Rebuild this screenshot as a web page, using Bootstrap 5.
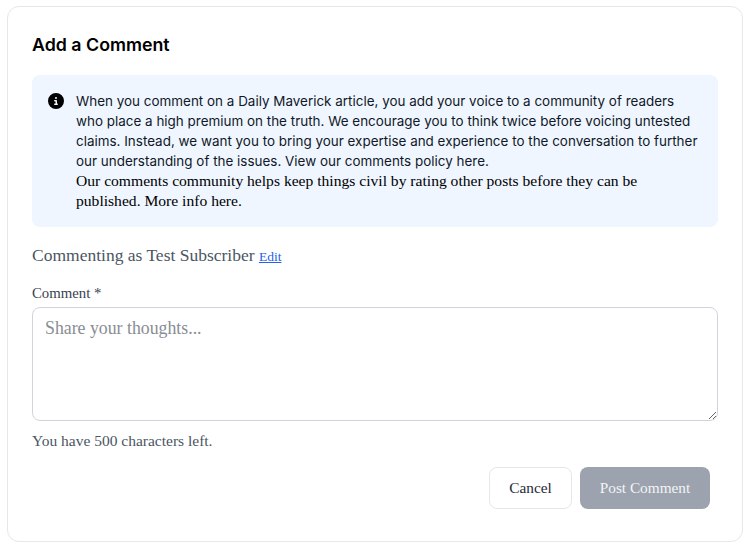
<!DOCTYPE html>
<html lang="en">
<head>
<meta charset="utf-8">
<title>Add a Comment</title>
<link href="https://cdn.jsdelivr.net/npm/bootstrap@5.3.0/dist/css/bootstrap.min.css" rel="stylesheet">
<style>
html,body{background:#fff;height:553px;overflow:hidden}
body{font-family:"Liberation Serif",serif;padding:6px 9px 0 7px}
.cm-panel{height:536px;border:1px solid #e5e7eb;border-radius:12px;padding:24px;background:#fff}
.cm-title{font-family:Inter,sans-serif;font-weight:600;font-size:17.8px;line-height:28px;color:#000;margin:0 0 16px}
.cm-note{background:#eff6ff;border-radius:8px;padding:16px;height:152px;margin-bottom:16px;font-size:14px;line-height:20px;color:#111827}
.cm-sans{font-family:Inter,sans-serif;font-size:13.45px;display:block}
.cm-serif{font-size:15.6px;display:block;color:#000}
.cm-icon{width:16px;height:16px;flex:none;margin:2px 12px 0 0}
.cm-as{font-size:17.5px;line-height:24px;color:#4b5563;margin:0 0 16px;height:24px}
.cm-as a{font-size:13.5px;color:#2563eb}
.cm-label{font-size:14.8px;line-height:20px;color:#374151;margin-bottom:4px;display:block}
.cm-input{display:block;width:100%;height:114px;border:1px solid #d1d5db;border-radius:8px;padding:8px 12px;font-size:17.8px;line-height:24px;font-family:inherit;color:#111827;background:#fff;outline:0}
.cm-input::placeholder{color:#888d94}
.cm-hint{font-size:15.5px;line-height:20px;color:#4b5563;margin:10px 0 16px}
.cm-btn{height:42px;border-radius:8px;font-size:15.3px;line-height:20px;font-family:inherit}
.cm-cancel{width:83px;background:#fff;border:1px solid #e5e7eb;color:#1f2937;padding:0}
.cm-post{width:130px;background:#9ca3af;border:0;color:#f3f4f6;padding:0}
.cm-post:disabled{background:#9ca3af;color:#f3f4f6;opacity:1}
.cm-actions{padding-right:8px}
</style>
</head>
<body>
<div class="cm-panel">
  <h2 class="cm-title">Add a Comment</h2>
  <div class="cm-note d-flex">
    <svg class="cm-icon" viewBox="0 0 512 512" aria-hidden="true"><path fill="#000" d="M256 512A256 256 0 1 0 256 0a256 256 0 1 0 0 512zM216 336h24V272H216c-13.3 0-24-10.7-24-24s10.7-24 24-24h48c13.3 0 24 10.7 24 24v88h8c13.3 0 24 10.7 24 24s-10.7 24-24 24H216c-13.3 0-24-10.7-24-24s10.7-24 24-24zm40-208a32 32 0 1 1 0 64 32 32 0 1 1 0-64z"/></svg>
    <div>
      <span class="cm-sans">When you comment on a Daily Maverick article, you add your voice to a community of readers who place a high premium on the truth. We encourage you to think twice before voicing untested claims. Instead, we want you to bring your expertise and experience to the conversation to further our understanding of the issues. View our comments policy here.</span>
      <span class="cm-serif">Our comments community helps keep things civil by rating other posts before they can be published. More info here.</span>
    </div>
  </div>
  <p class="cm-as">Commenting as Test Subscriber <a href="#">Edit</a></p>
  <label class="cm-label" for="cm-text">Comment *</label>
  <textarea class="cm-input" id="cm-text" placeholder="Share your thoughts..."></textarea>
  <p class="cm-hint">You have 500 characters left.</p>
  <div class="d-flex justify-content-end gap-2 cm-actions">
    <button type="button" class="btn cm-btn cm-cancel">Cancel</button>
    <button type="button" class="btn cm-btn cm-post" disabled>Post Comment</button>
  </div>
</div>
<script src="https://cdn.jsdelivr.net/npm/bootstrap@5.3.0/dist/js/bootstrap.bundle.min.js"></script>
</body>
</html>
